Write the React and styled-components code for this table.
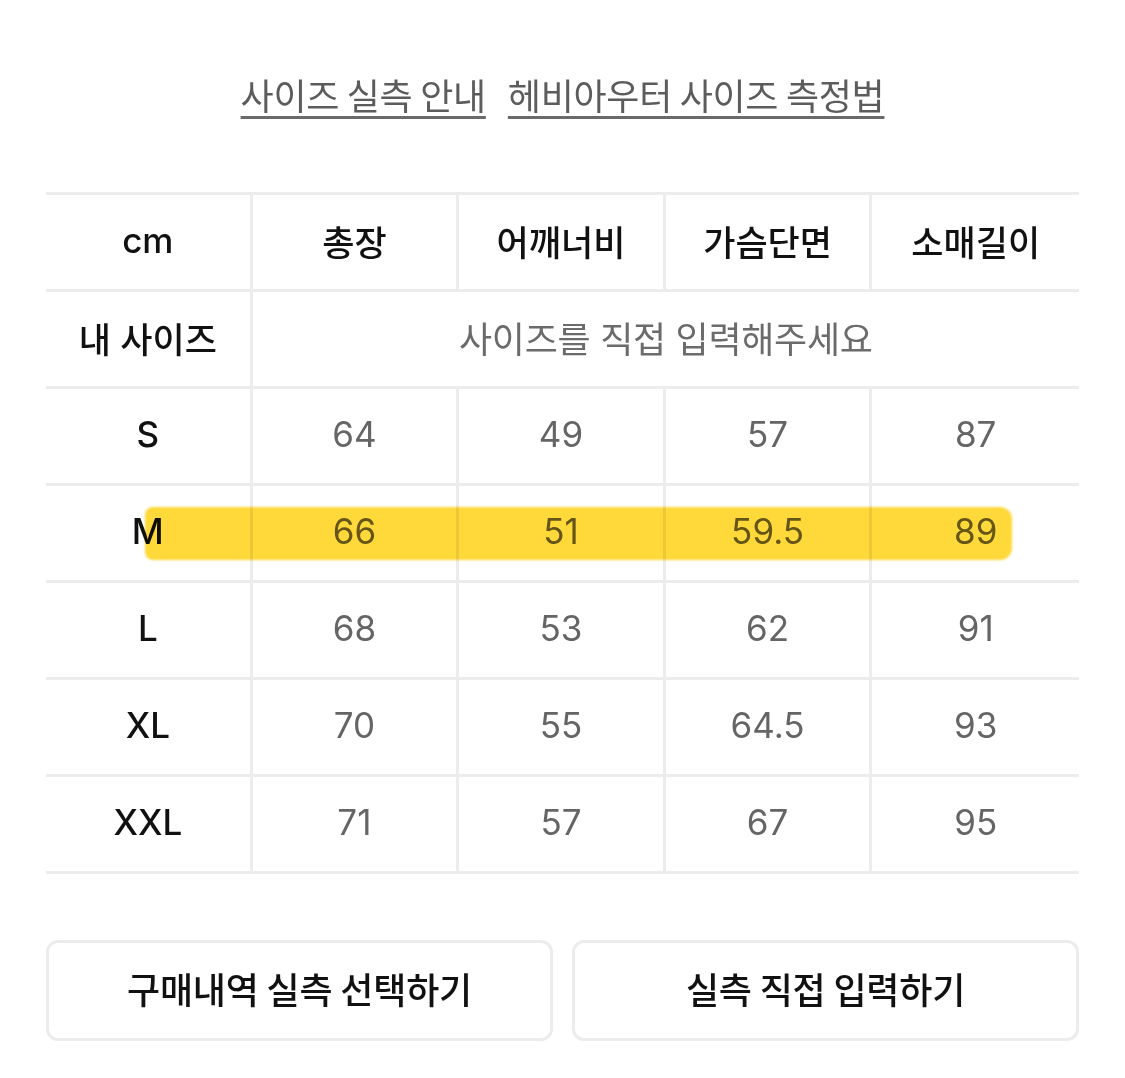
import React from "react";
import styled, { createGlobalStyle } from "styled-components";

const Global = createGlobalStyle`
  html, body { margin: 0; padding: 0; background: #fff; }
  body { font-family: "Inter", "Noto Sans CJK KR", sans-serif; -webkit-font-smoothing: antialiased; }
`;

const Page = styled.div`
  width: 1125px;
  padding: 0 46px;
  box-sizing: border-box;
`;

const LinkBar = styled.div`
  display: flex;
  justify-content: center;
  gap: 22px;
  padding-top: 69px;
  height: 192px;
  box-sizing: border-box;
`;

const GuideLink = styled.a`
  font-family: "Noto Sans CJK KR", sans-serif;
  font-size: 36px;
  line-height: 50px;
  color: #5c5c5c;
  text-decoration: underline;
  text-decoration-thickness: 3px;
  text-underline-offset: 6px;
  text-decoration-color: #6a6a6a;
  letter-spacing: -0.3px;
  cursor: pointer;
`;

const Table = styled.div`
  border-top: 3px solid #ececec;
`;

const Row = styled.div`
  position: relative;
  display: grid;
  grid-template-columns: repeat(5, 1fr);
  height: 97px;
`;

const Cell = styled.div`
  display: flex;
  align-items: center;
  justify-content: center;
  border-bottom: 3px solid #ececec;
  border-right: ${(p) => (p.$last ? "none" : "3px solid #ececec")};
  grid-column: ${(p) => (p.$span ? `span ${p.$span}` : "auto")};
  font-size: ${(p) => (p.$kind === "value" ? "35px" : p.$kind === "hint" ? "36px" : "35px")};
  font-weight: ${(p) => (p.$kind === "value" || p.$kind === "hint" ? 400 : 500)};
  color: ${(p) => (p.$kind === "value" ? "#656565" : p.$kind === "hint" ? "#6b6b6b" : "#111")};
  letter-spacing: ${(p) => (p.$kind === "hint" ? "-0.3px" : "0")};
  padding-bottom: 4px;
`;

const Highlight = styled.div`
  position: absolute;
  left: 99px;
  right: 67px;
  top: 21px;
  height: 53px;
  background: #ffd83a;
  border-radius: 8px 12px 12px 8px;
  filter: blur(1.2px);
  mix-blend-mode: multiply;
  pointer-events: none;
`;

const Buttons = styled.div`
  display: grid;
  grid-template-columns: 1fr 1fr;
  gap: 19px;
  margin-top: 66px;
`;

const Button = styled.button`
  height: 101px;
  border: 3px solid #ececec;
  border-radius: 12px;
  background: #fff;
  font-family: "Noto Sans CJK KR", sans-serif;
  font-size: 36px;
  font-weight: 500;
  color: #111;
  letter-spacing: -0.2px;
  padding: 0 0 6px;
  cursor: pointer;
`;

const headers = ["총장", "어깨너비", "가슴단면", "소매길이"];
const rows = [
  ["S", "64", "49", "57", "87"],
  ["M", "66", "51", "59.5", "89"],
  ["L", "68", "53", "62", "91"],
  ["XL", "70", "55", "64.5", "93"],
  ["XXL", "71", "57", "67", "95"],
];

export default function App() {
  return (
    <Page>
      <Global />
      <LinkBar>
        <GuideLink>사이즈 실측 안내</GuideLink>
        <GuideLink>헤비아우터 사이즈 측정법</GuideLink>
      </LinkBar>
      <Table>
        <Row>
          <Cell>cm</Cell>
          {headers.map((h, i) => (
            <Cell key={h} $last={i === headers.length - 1}>{h}</Cell>
          ))}
        </Row>
        <Row>
          <Cell>내 사이즈</Cell>
          <Cell $span={4} $last $kind="hint">사이즈를 직접 입력해주세요</Cell>
        </Row>
        {rows.map((r) => (
          <Row key={r[0]}>
            <Cell>{r[0]}</Cell>
            {r.slice(1).map((v, i) => (
              <Cell key={i} $kind="value" $last={i === 3}>{v}</Cell>
            ))}
            {r[0] === "M" && <Highlight />}
          </Row>
        ))}
      </Table>
      <Buttons>
        <Button>구매내역 실측 선택하기</Button>
        <Button>실측 직접 입력하기</Button>
      </Buttons>
    </Page>
  );
}
